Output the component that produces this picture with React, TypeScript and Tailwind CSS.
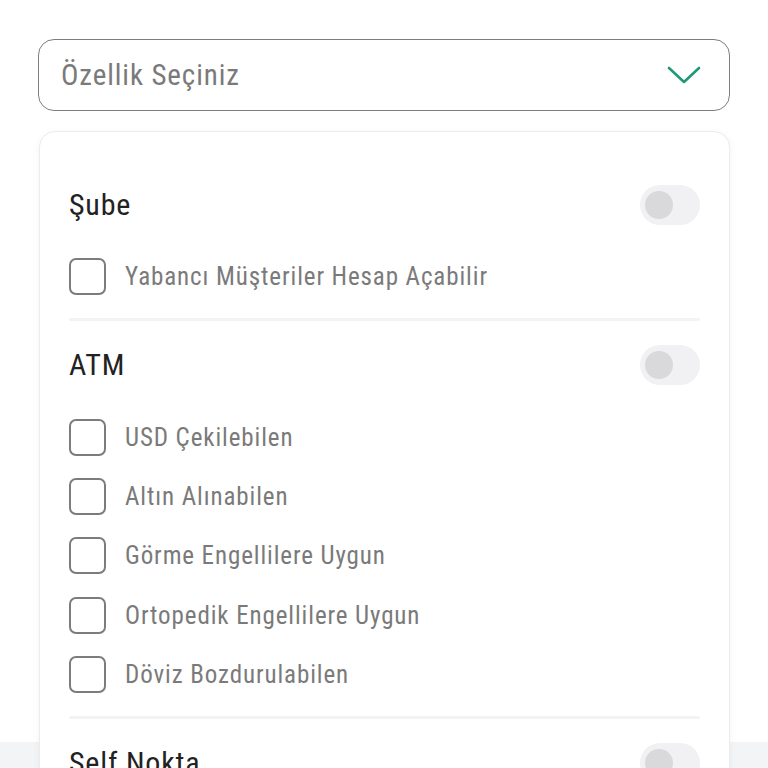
import React from "react";

const font = { fontFamily: "'Liberation Sans Narrow', 'Roboto Condensed', 'Open Sans', sans-serif" };

function Toggle() {
  return (
    <div className="w-[60px] h-[40px] rounded-full bg-[#f1f1f3] flex items-center px-[5px]">
      <div className="w-[28px] h-[28px] rounded-full bg-[#d9d9db]" />
    </div>
  );
}

function CheckRow({ label }: { label: string }) {
  return (
    <div className="h-[59.4px] flex items-center gap-[19px]">
      <div className="w-[37px] h-[37px] rounded-[7px] border-2 border-[#7c7c7c] bg-white shrink-0" />
      <span className="text-[25px] tracking-[0.9px] text-[#7a7a7a] leading-none">{label}</span>
    </div>
  );
}

function Section({ title, items, last }: { title: string; items: string[]; last?: boolean }) {
  return (
    <div>
      <div className="h-[40px] flex items-center justify-between">
        <span className="text-[30px] tracking-[0.8px] text-[#222] leading-none">{title}</span>
        <Toggle />
      </div>
      {items.length > 0 && (
        <div className="mt-[22px]">
          {items.map((it) => (
            <CheckRow key={it} label={it} />
          ))}
        </div>
      )}
      {!last && <div className="mt-[12px] mb-[24px] h-[3px] bg-[#f3f3f5] rounded-full" />}
    </div>
  );
}

export default function App() {
  return (
    <div className="w-[768px] h-[768px] overflow-hidden bg-white relative" style={font}>
      <div className="h-[742px] bg-white px-[38px] pt-[39px] relative">
        <div className="h-[72px] rounded-[16px] border-[1.5px] border-[#7d7d7d] flex items-center justify-between pl-[22px] pr-[28px]">
          <span className="text-[29px] tracking-[0.9px] text-[#7a7a7a] leading-none">Özellik Seçiniz</span>
          <svg width="34" height="20" viewBox="0 0 34 20" fill="none">
            <path d="M2 3 L17 17 L32 3" stroke="#1e9a78" strokeWidth="2.6" strokeLinecap="round" strokeLinejoin="round" />
          </svg>
        </div>
        <div className="absolute left-[39px] top-[131px] w-[691px] rounded-[16px] border border-[#ececec] bg-white shadow-[0_2px_8px_rgba(0,0,0,0.05)] pl-[29px] pr-[29px] pt-[53px] pb-[40px] z-10">
          <Section title="Şube" items={["Yabancı Müşteriler Hesap Açabilir"]} />
          <Section
            title="ATM"
            items={[
              "USD Çekilebilen",
              "Altın Alınabilen",
              "Görme Engellilere Uygun",
              "Ortopedik Engellilere Uygun",
              "Döviz Bozdurulabilen",
            ]}
          />
          <Section title="Self Nokta" items={[]} last />
        </div>
      </div>
      <div className="h-[26px] bg-[#f3f4f6]" />
    </div>
  );
}
